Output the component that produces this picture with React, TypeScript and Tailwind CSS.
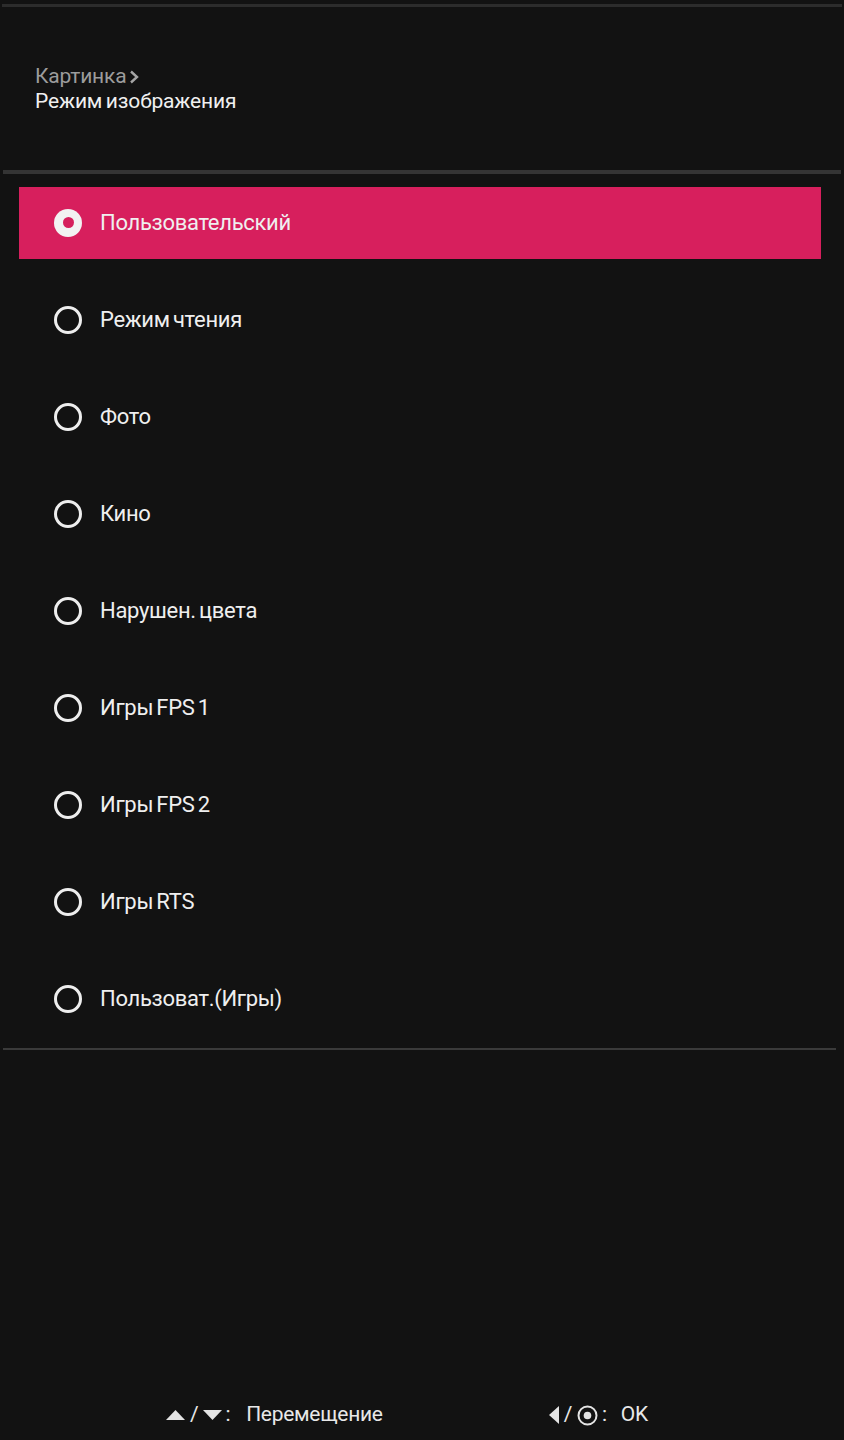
import React from "react"

const MODES = [
  "Пользовательский",
  "Режим чтения",
  "Фото",
  "Кино",
  "Нарушен. цвета",
  "Игры FPS 1",
  "Игры FPS 2",
  "Игры RTS",
  "Пользоват.(Игры)",
]

const font = { fontFamily: "Roboto, 'Liberation Sans', sans-serif" }

function Radio({ on }: { on: boolean }) {
  if (on) {
    return (
      <span className="w-[28px] h-[28px] rounded-full bg-[#f2f2f2] flex items-center justify-center shrink-0">
        <span className="w-[11px] h-[11px] rounded-full bg-[#d61f5c]" />
      </span>
    )
  }
  return <span className="w-[28px] h-[28px] rounded-full border-[3px] border-[#eeeeee] shrink-0" />
}

export default function App() {
  const selected = 0
  return (
    <div className="w-[844px] h-[1440px] bg-[#121212] text-[#efefef] flex flex-col" style={font}>
      <div className="pt-[4px] px-[2px]">
        <div className="h-[3px] bg-[#2c2c2c]" />
      </div>

      <div className="pl-[35px] pt-[57px] h-[163px]">
        <div className="text-[21px] leading-[25px] text-[#9c9c9c] tracking-[-0.2px] flex items-center gap-[3px]">
          Картинка
          <svg width="10" height="14" viewBox="0 0 10 14" className="mt-[1px]">
            <path d="M2 1.5 L8 7 L2 12.5" fill="none" stroke="#a5a5a5" strokeWidth="2.4" />
          </svg>
        </div>
        <div className="text-[21px] leading-[25px] text-[#f0f0f0] tracking-[-0.15px] [word-spacing:-1.5px]">Режим изображения</div>
      </div>

      <div className="px-[3px]">
        <div className="h-[4px] bg-[#343434]" />
      </div>

      <div className="flex flex-col">
        {MODES.map((m, i) => (
          <div key={m} className="h-[97px] flex items-center">
            <div
              className={`h-[72px] ml-[19px] mr-[23px] flex-1 flex items-center pl-[35px] gap-[18px] ${
                i === selected ? "bg-[#d71f5d]" : ""
              }`}
            >
              <Radio on={i === selected} />
              <span className="text-[22px] tracking-[-0.3px] [word-spacing:-2px]">{m}</span>
            </div>
          </div>
        ))}
      </div>

      <div className="px-[3px] pr-[8px] mt-[1px]">
        <div className="h-[2px] bg-[#3a3a3a]" />
      </div>

      <div className="flex-1" />

      <div className="h-[50px] flex items-center text-[21px] tracking-[-0.3px] text-[#e8e8e8]">
        <div className="ml-[166px] flex items-center">
          <svg width="19" height="10" viewBox="0 0 19 10"><path d="M9.5 0 L19 10 L0 10 Z" fill="#e4e4e4" /></svg>
          <span className="mx-[5px]">/</span>
          <svg width="19" height="10" viewBox="0 0 19 10"><path d="M0 0 L19 0 L9.5 10 Z" fill="#e4e4e4" /></svg>
          <span className="ml-[3px]">:</span>
          <span className="ml-[16px]">Перемещение</span>
        </div>
        <div className="ml-[166px] flex items-center">
          <svg width="10" height="18" viewBox="0 0 10 18"><path d="M10 0 L10 18 L0 9 Z" fill="#e4e4e4" /></svg>
          <span className="mx-[5px]">/</span>
          <svg width="21" height="21" viewBox="0 0 21 21">
            <circle cx="10.5" cy="10.5" r="9" fill="none" stroke="#e4e4e4" strokeWidth="2" />
            <circle cx="10.5" cy="10.5" r="3.8" fill="#e4e4e4" />
          </svg>
          <span className="ml-[4px]">:</span>
          <span className="ml-[14px]">OK</span>
        </div>
      </div>
    </div>
  )
}
